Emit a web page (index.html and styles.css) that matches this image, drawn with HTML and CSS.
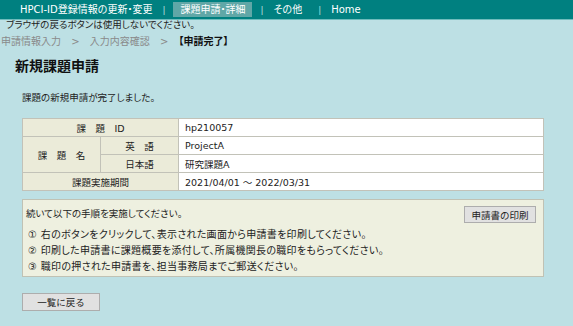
FILE: index.html
```html
<!DOCTYPE html>
<html lang="ja">
<head>
    <meta charset="UTF-8">
    <title>新規課題申請</title>
    <link rel="stylesheet" href="styles.css">
</head>
<body>

    <!-- top menu -->
    <div class="menu">
        <a class="menu-item" href="#">HPCI-ID登録情報の更新・変更</a>
        <span class="sep">|</span>
        <a class="menu-item current" href="#">課題申請・詳細</a>
        <span class="sep">|</span>
        <a class="menu-item" href="#">その他</a>
        <span class="sep last">|</span>
        <a class="menu-item" href="#">Home</a>
    </div>

    <p class="notice">ブラウザの戻るボタンは使用しないでください。</p>
    <p class="steps">申請情報入力 <span class="arrow">&gt;</span> 入力内容確認 <span class="arrow">&gt;</span> <b class="now">【申請完了】</b></p>

    <h1>新規課題申請</h1>

    <div class="content">
        <p class="message">課題の新規申請が完了しました。</p>

        <table class="info">
            <tr>
                <th colspan="2">課　題　ID</th>
                <td>hp210057</td>
            </tr>
            <tr>
                <th rowspan="2">課　題　名</th>
                <th>英　語</th>
                <td>ProjectA</td>
            </tr>
            <tr>
                <th>日本語</th>
                <td>研究課題A</td>
            </tr>
            <tr>
                <th colspan="2">課題実施期間</th>
                <td>2021/04/01 ～ 2022/03/31</td>
            </tr>
        </table>

        <div class="todo">
            <div class="todo-text">
                <p class="todo-lead">続いて以下の手順を実施してください。</p>
                <ol class="todo-list">
                    <li>① 右のボタンをクリックして、表示された画面から申請書を印刷してください。</li>
                    <li>② 印刷した申請書に課題概要を添付して、所属機関長の職印をもらってください。</li>
                    <li>③ 職印の押された申請書を、担当事務局までご郵送ください。</li>
                </ol>
            </div>
            <button class="btn print">申請書の印刷</button>
        </div>

        <button class="btn back">一覧に戻る</button>
    </div>

</body>
</html>
```

FILE: styles.css
```css
body {
    margin: 0;
    background-color: #bde0e4;
    color: #222;
    font-family: "DejaVu Sans", "Noto Sans CJK JP", sans-serif;
    font-size: 9.5px;
    font-feature-settings: "palt";
}

p {
    margin: 0;
}

/* top menu */
.menu {
    display: flex;
    align-items: center;
    height: 19px;
    padding-left: 16px;
    background-color: #008080;
    border-bottom: 1px solid #6fbcbc;
}

.menu-item {
    color: #ffffff;
    text-decoration: none;
    font-size: 10px;
    line-height: 15px;
    padding: 0 4px;
}

.menu-item.current {
    background-color: #60a7a7;
    padding: 0 7px;
    margin: 0 2px;
}

.sep {
    color: #b8dede;
    margin: 0 6px;
    font-size: 9px;
}

.sep.last {
    margin: 0 6px 0 12px;
}

.notice {
    padding-left: 6px;
    line-height: 10px;
}

.steps {
    margin-top: 5px;
    padding-left: 1px;
    line-height: 13px;
    font-size: 10px;
    color: #8a8a8a;
}

.steps .arrow {
    margin: 0 7px;
}

.steps .now {
    color: #111;
}

h1 {
    margin: 9px 0 0 15px;
    font-size: 14px;
    line-height: 19px;
    color: #111;
}

.content {
    margin: 16px 29px 0 22px;
}

.message {
    line-height: 12px;
}

/* result table */
.info {
    width: 100%;
    margin-top: 14px;
    border-collapse: collapse;
    border: 1px solid #b9b9b0;
}

.info th, .info td {
    height: 17px;
    padding: 0;
    border: 1px solid #c2c2b8;
    font-weight: normal;
}

.info th {
    width: 77px;
    background-color: #ebebd9;
    text-align: center;
}

.info td {
    padding-left: 6px;
    background-color: #ffffff;
}

/* next steps box */
.todo {
    display: flex;
    justify-content: space-between;
    align-items: flex-start;
    margin-top: 8px;
    padding: 6px 7px 1px 3px;
    background-color: #eef0e0;
    border: 1px solid #c0c2b4;
}

.todo-lead {
    line-height: 16px;
}

.todo-list {
    list-style: none;
    margin: 5px 0 0 0;
    padding-left: 2px;
}

.todo-list li {
    line-height: 16px;
    font-size: 10px;
    letter-spacing: 0.3px;
}

.btn {
    font-family: "DejaVu Sans", "Noto Sans CJK JP", sans-serif;
    font-size: 9.5px;
    color: #222;
    background-color: #e1e1e1;
    border: 1px solid #adadad;
    padding: 0;
}

.print {
    width: 72px;
    height: 17px;
}

.back {
    width: 78px;
    height: 18px;
    margin-top: 16px;
}
```
